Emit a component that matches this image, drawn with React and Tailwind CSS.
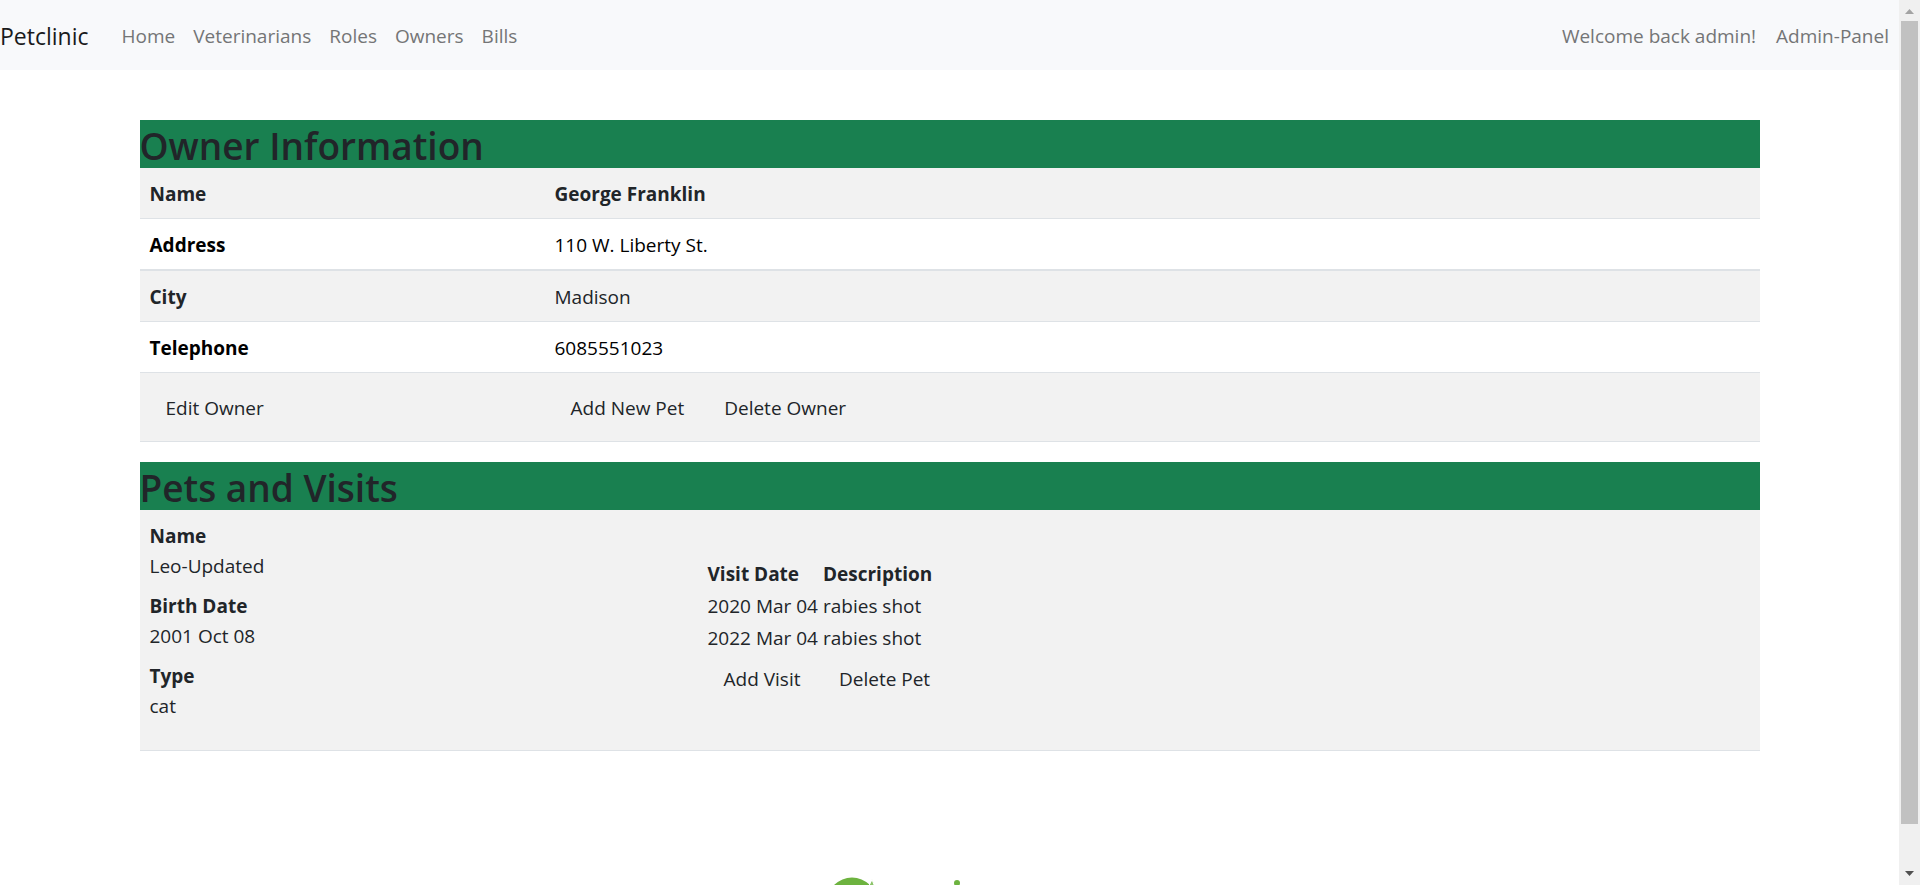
const navLinks = ['Home', 'Veterinarians', 'Roles', 'Owners', 'Bills'];
const accountLinks = ['Welcome back admin!', 'Admin-Panel'];

const ownerRows = [
  { label: 'Name', value: 'George Franklin', row: 'bg-[#f2f2f2] text-[#212529]', line: 'border-b', weight: 'font-bold' },
  { label: 'Address', value: '110 W. Liberty St.', row: 'text-black', line: 'border-b-2', weight: 'font-normal' },
  { label: 'City', value: 'Madison', row: 'bg-[#f2f2f2] text-[#212529]', line: 'border-b', weight: 'font-normal' },
  { label: 'Telephone', value: '6085551023', row: 'text-black', line: 'border-b', weight: 'font-normal' },
];

const petDetails = [
  ['Name', 'Leo-Updated'],
  ['Birth Date', '2001 Oct 08'],
  ['Type', 'cat'],
];

const visits = [
  ['2020 Mar 04', 'rabies shot'],
  ['2022 Mar 04', 'rabies shot'],
];

function ActionLink({ children }) {
  return (
    <a href="#" className="inline-block border border-transparent px-[15px] py-2 text-[#212529]">{children}</a>
  );
}

function SectionTitle({ children }) {
  return (
    <h2 className="bg-[#198050] pt-1 text-[37px] leading-[44px] font-semibold text-[#212529]">{children}</h2>
  );
}

function ScrollTrack() {
  return (
    <div aria-hidden="true" className="flex w-[21px] shrink-0 flex-col items-center bg-[#f0f0f0]">
      <svg className="h-[21px] w-[21px] shrink-0" viewBox="0 0 21 21">
        <path d="M6 14 L10.5 9 L15 14 Z" fill="#a3a3a3" />
      </svg>
      <div className="flex min-h-0 w-[17px] flex-1 flex-col">
        <div className="h-[95.3%] bg-[#c1c1c1]" />
      </div>
      <svg className="h-[21px] w-[21px] shrink-0" viewBox="0 0 21 21">
        <path d="M6 7 L10.5 12 L15 7 Z" fill="#505050" />
      </svg>
    </div>
  );
}

export default function App() {
  return (
    <div className="flex h-screen overflow-hidden bg-white font-['Open_Sans','Noto_Sans',sans-serif] text-[19px] leading-[30px] text-[#212529]">
      <div className="min-w-0 flex-1 overflow-hidden">
        <nav className="flex h-[70px] items-center bg-[#f8f9fb] pt-[2px]">
          <a href="#" className="mr-6 text-[23px] text-[#1a1a1b]">Petclinic</a>
          <ul className="flex flex-1">
            {navLinks.map((t) => (
              <li key={t}><a href="#" className="block px-[9px] py-2 text-[#747576]">{t}</a></li>
            ))}
          </ul>
          <ul className="flex">
            {accountLinks.map((t) => (
              <li key={t}><a href="#" className="block px-[10px] py-2 text-[#747576]">{t}</a></li>
            ))}
          </ul>
        </nav>

        <main className="mx-auto mt-[50px] max-w-[1620px]">
          <SectionTitle>Owner Information</SectionTitle>
          <table className="w-full table-fixed border-separate border-spacing-0 text-left">
            <colgroup>
              <col className="w-1/4" />
              <col />
            </colgroup>
            <tbody>
              {ownerRows.map((r) => (
                <tr key={r.label} className={r.row}>
                  <th scope="row" className={`${r.line} border-[#dee2e6] px-[10px] pt-[11px] pb-[9px] font-bold`}>{r.label}</th>
                  <td className={`${r.line} ${r.weight} border-[#dee2e6] px-[10px] pt-[11px] pb-[9px]`}>{r.value}</td>
                </tr>
              ))}
              <tr className="bg-[#f2f2f2]">
                <td className="border-b border-[#dee2e6] px-[10px] pt-[11px] pb-[9px]">
                  <div className="flex"><ActionLink>Edit Owner</ActionLink></div>
                </td>
                <td className="border-b border-[#dee2e6] px-[10px] pt-[11px] pb-[9px]">
                  <div className="flex gap-2">
                    <ActionLink>Add New Pet</ActionLink>
                    <ActionLink>Delete Owner</ActionLink>
                  </div>
                </td>
              </tr>
            </tbody>
          </table>

          <div className="mt-5">
            <SectionTitle>Pets and Visits</SectionTitle>
            <div className="flex items-center border-b border-[#dee2e6] bg-[#f2f2f2]">
              <dl className="w-[35%] px-[10px] pt-[11px] pb-[19px]">
                {petDetails.map(([k, v]) => (
                  <div key={k} className="mb-[10px]">
                    <dt className="font-bold">{k}</dt>
                    <dd>{v}</dd>
                  </div>
                ))}
              </dl>
              <table className="mt-[2px] text-left">
                <thead>
                  <tr>
                    <th scope="col" className="p-px font-bold">Visit Date</th>
                    <th scope="col" className="p-px font-bold">Description</th>
                  </tr>
                </thead>
                <tbody>
                  {visits.map(([d, t]) => (
                    <tr key={d}>
                      <td className="p-px pr-1">{d}</td>
                      <td className="p-px">{t}</td>
                    </tr>
                  ))}
                  <tr>
                    <td className="p-px"><ActionLink>Add Visit</ActionLink></td>
                    <td className="p-px"><ActionLink>Delete Pet</ActionLink></td>
                  </tr>
                </tbody>
              </table>
            </div>
          </div>

          <footer className="mt-[126px] flex justify-center">
            <svg className="h-[52px] w-[246px]" viewBox="0 0 246 52" role="img" aria-label="Spring">
              <circle cx="25" cy="25.500" r="25" fill="#6db33f" />
              <path d="M45 2.500 Q50 13 49 28 L38 12 Q43 9 45 2.500 Z" fill="#8cc46a" stroke="#fff" />
              <circle cx="130" cy="6" r="3" fill="#6db33f" />
            </svg>
          </footer>
        </main>
      </div>
      <ScrollTrack />
    </div>
  );
}
